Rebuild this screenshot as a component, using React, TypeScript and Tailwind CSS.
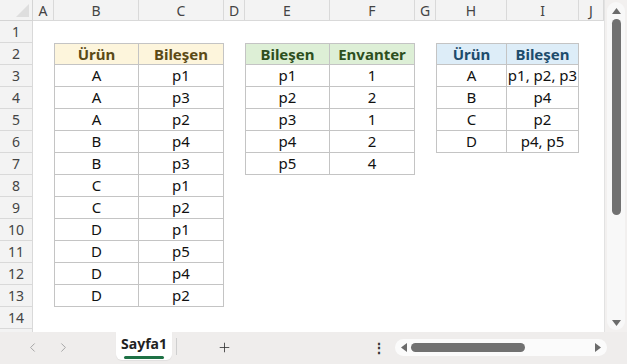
import React from 'react';
import { ChevronLeft, ChevronRight, Plus } from 'lucide-react';

type Tone = 'yellow' | 'green' | 'blue';

interface Table {
  row: number; // first sheet row
  col: number; // first sheet column (1 = A)
  tone: Tone;
  data: string[][];
}

const COLS = [
  { l: 'A', w: 21 },
  { l: 'B', w: 85 },
  { l: 'C', w: 85 },
  { l: 'D', w: 21 },
  { l: 'E', w: 85 },
  { l: 'F', w: 85 },
  { l: 'G', w: 21 },
  { l: 'H', w: 71 },
  { l: 'I', w: 72 },
  { l: 'J', w: 25 },
];

const TABLES: Table[] = [
  {
    row: 2,
    col: 2,
    tone: 'yellow',
    data: [
      ['Ürün', 'Bileşen'],
      ['A', 'p1'],
      ['A', 'p3'],
      ['A', 'p2'],
      ['B', 'p4'],
      ['B', 'p3'],
      ['C', 'p1'],
      ['C', 'p2'],
      ['D', 'p1'],
      ['D', 'p5'],
      ['D', 'p4'],
      ['D', 'p2'],
    ],
  },
  {
    row: 2,
    col: 5,
    tone: 'green',
    data: [
      ['Bileşen', 'Envanter'],
      ['p1', '1'],
      ['p2', '2'],
      ['p3', '1'],
      ['p4', '2'],
      ['p5', '4'],
    ],
  },
  {
    row: 2,
    col: 8,
    tone: 'blue',
    data: [
      ['Ürün', 'Bileşen'],
      ['A', 'p1, p2, p3'],
      ['B', 'p4'],
      ['C', 'p2'],
      ['D', 'p4, p5'],
    ],
  },
];

const headTone: Record<Tone, string> = {
  yellow: 'bg-[#fdf5dc] text-[#5b4a16]',
  green: 'bg-[#ddefd6] text-[#2d4f1e]',
  blue: 'bg-[#ddedf8] text-[#1d4c6c]',
};

const ROWS = 15;

function cellAt(r: number, c: number) {
  for (const t of TABLES) {
    const i = r - t.row;
    const j = c - t.col;
    if (i >= 0 && i < t.data.length && j >= 0 && j < t.data[0].length) {
      return { text: t.data[i][j], head: i === 0, tone: t.tone, top: i === 0, left: j === 0 };
    }
  }
  return null;
}

const Sheet = () => (
  <div className="grid grid-cols-[33px_21px_85px_85px_21px_85px_85px_21px_71px_72px_25px] grid-rows-[21px] auto-rows-[22px] bg-white text-[15px] text-[#111]">
    {/* corner + column headers */}
    <div className="relative bg-[#f3f3f3] border-r border-b border-[#d4d4d4]">
      <svg className="absolute right-[3px] bottom-[3px]" width="13" height="13">
        <polygon points="13,0 13,13 0,13" fill="#dedede" />
      </svg>
    </div>
    {COLS.map((c) => (
      <div
        key={c.l}
        className="flex items-center justify-center bg-[#f3f3f3] border-r border-b border-[#d9d9d9] text-[14px] text-[#444]"
      >
        {c.l}
      </div>
    ))}
    {Array.from({ length: ROWS }, (_, ri) => {
      const r = ri + 1;
      return (
        <React.Fragment key={r}>
          <div className="flex items-center justify-center bg-[#f3f3f3] border-r border-b border-[#d9d9d9] text-[14px] text-[#444]">
            {r}
          </div>
          {COLS.map((_, ci) => {
            const cell = cellAt(r, ci + 1);
            if (!cell) return <div key={ci} />;
            return (
              <div
                key={ci}
                className={`flex items-center justify-center whitespace-nowrap border-r border-b border-[#c4c4c4] ${cell.left ? 'border-l' : ''} ${cell.top ? 'border-t' : ''} ${
                  cell.head ? `font-bold ${headTone[cell.tone]}` : ''
                }`}
              >
                {cell.text}
              </div>
            );
          })}
        </React.Fragment>
      );
    })}
  </div>
);

const Tri = ({ dir }: { dir: 'up' | 'down' | 'left' | 'right' }) => {
  const pts = {
    up: '0,7 4.5,1 9,7',
    down: '0,1 4.5,7 9,1',
    left: '7,0 1,4.5 7,9',
    right: '1,0 7,4.5 1,9',
  }[dir];
  const v = dir === 'up' || dir === 'down';
  return (
    <svg width={v ? 9 : 8} height={v ? 8 : 9} className="shrink-0">
      <polygon points={pts} fill="#6b6b6b" />
    </svg>
  );
};

export default function App() {
  return (
    <div className="w-[627px] h-[364px] overflow-hidden bg-[#efedec] font-['Noto_Sans','Liberation_Sans',sans-serif] flex flex-col">
      <div className="h-[332px] flex overflow-hidden">
        <div className="w-[605px] shrink-0 h-[332px] overflow-hidden border-r border-[#e2e2e2]">
          <Sheet />
        </div>
        <div className="flex-1 bg-[#f2f0ef] p-[2px]">
          <div className="h-full rounded-full bg-[#f8f8f8] flex flex-col items-center pt-[5px] pb-[3px]">
            <Tri dir="up" />
            <div className="mt-[4px] w-[9px] h-[196px] rounded-full bg-[#717171]" />
            <div className="flex-1" />
            <Tri dir="down" />
          </div>
        </div>
      </div>
      <div className="flex-1 flex items-start">
        <div className="w-[116px] shrink-0 h-[30px] flex items-center text-[#a0a0a0]">
          <ChevronLeft size={15} strokeWidth={1.5} className="ml-[25px] shrink-0" />
          <ChevronRight size={15} strokeWidth={1.5} className="ml-[16px] shrink-0" />
        </div>
        <div className="w-[56px] shrink-0 h-[28px] bg-white rounded-b-[6px] flex flex-col items-center pt-[3px] shadow-[0_1px_1px_rgba(0,0,0,0.06)]">
          <span className="text-[14px] font-bold text-[#222] leading-[18px]">Sayfa1</span>
          <div className="mt-[3px] w-[40px] h-[3px] rounded-full bg-[#1e7145]" />
        </div>
        <div className="ml-[4px] mt-[6px] shrink-0 w-px h-[17px] bg-[#cfcfcf]" />
        <div className="w-[94px] shrink-0 h-[30px] flex items-center justify-center text-[#333]">
          <Plus size={15} strokeWidth={1.3} />
        </div>
        <div className="ml-[100px] w-[16px] shrink-0 h-[30px] flex items-center justify-center text-[#333] text-[14px] font-bold">
          ⋮
        </div>
        <div className="ml-[8px] mt-[7px] shrink-0 w-[212px] h-[17px] rounded-full bg-[#fbfbfb] flex items-center px-[5px]">
          <Tri dir="left" />
          <div className="ml-[3px] w-[114px] h-[9px] rounded-full bg-[#717171]" />
          <div className="flex-1" />
          <Tri dir="right" />
        </div>
      </div>
    </div>
  );
}
